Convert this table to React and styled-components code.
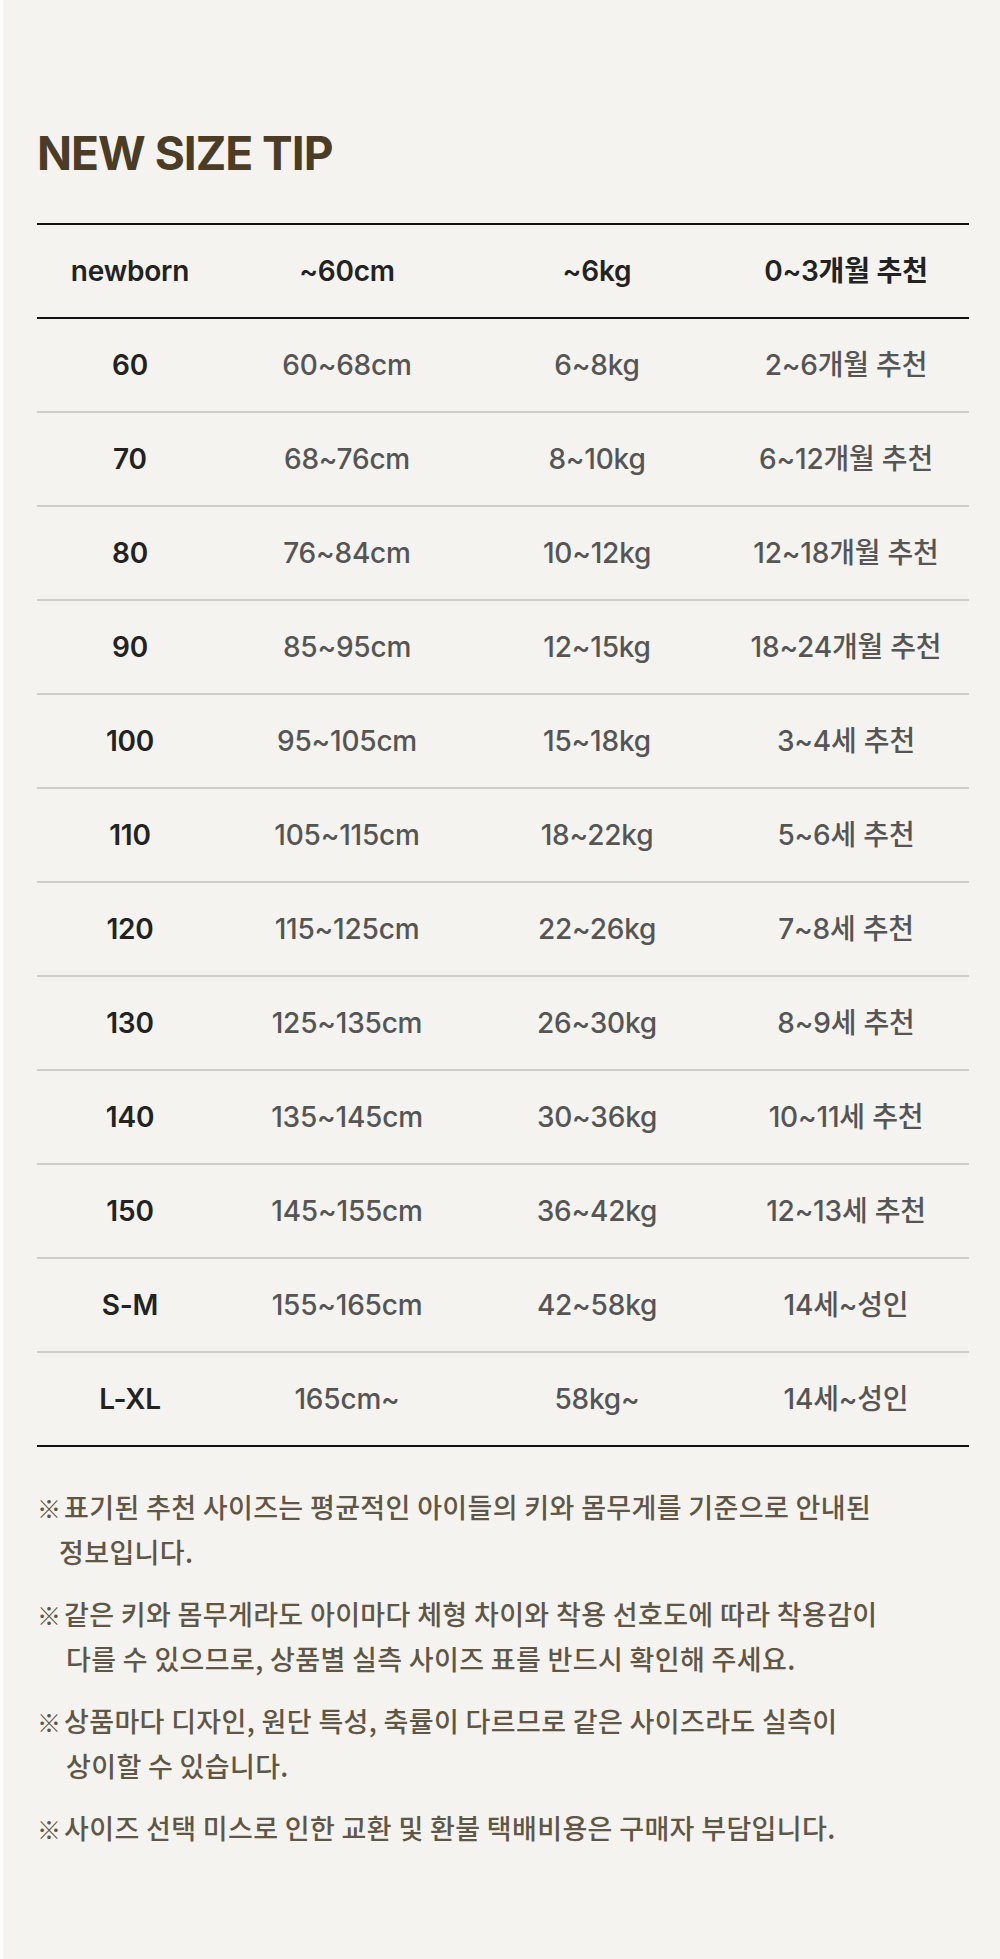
import React from "react";
import styled, { createGlobalStyle } from "styled-components";

const GlobalStyle = createGlobalStyle`
  html, body { margin: 0; padding: 0; background: #fbfbfa; }
  body { font-family: Inter, "Noto Sans CJK KR", sans-serif; }
  * { box-sizing: border-box; }
`;

const Page = styled.div`
  margin-left: 3px;
  min-height: 1959px;
  background: #f4f3ef;
  padding: 126px 31px 80px 34px;
`;

const Title = styled.h1`
  margin: 0 0 42px;
  font-family: Inter, "Noto Sans CJK KR", sans-serif;
  font-size: 46px;
  line-height: 55px;
  font-weight: 700;
  color: #4a3c25;
  letter-spacing: -1px;
`;

const Table = styled.div`
  width: 932px;
  border-top: 2px solid #111;
  border-bottom: 2px solid #111;
`;

const Row = styled.div`
  display: grid;
  grid-template-columns: 186px 248px 252px 1fr;
  align-items: center;
  height: 94px;
  border-bottom: 2px solid ${(p) => (p.$head ? "#111" : "#cfcdc9")};
  &:last-child { border-bottom: none; height: 92px; }
`;

const Cell = styled.div`
  text-align: center;
  font-family: Inter, "Noto Sans CJK KR", sans-serif;
  font-size: 28px;
  line-height: 34px;
  font-weight: ${(p) => (p.$strong ? 600 : 500)};
  color: ${(p) => (p.$strong ? "#222" : "#555")};
  letter-spacing: -0.2px;
`;

const Notes = styled.div`
  margin-top: 37px;
  display: flex;
  flex-direction: column;
  gap: 17px;
`;

const Note = styled.p`
  margin: 0;
  padding-left: ${(p) => p.$indent}px;
  text-indent: -${(p) => p.$indent}px;
  font-family: "Noto Sans CJK KR", sans-serif;
  font-size: 27px;
  line-height: 45px;
  font-weight: 500;
  color: #5f5646;
  letter-spacing: 0.35px;
`;

const Mark = styled.span`
  display: inline-block;
  text-indent: 0;
  width: 27px;
  font-size: 24px;
  line-height: 1;
  font-weight: 700;
  letter-spacing: 0;
`;

const header = ["newborn", "~60cm", "~6kg", "0~3개월 추천"];
const rows = [
  ["60", "60~68cm", "6~8kg", "2~6개월 추천"],
  ["70", "68~76cm", "8~10kg", "6~12개월 추천"],
  ["80", "76~84cm", "10~12kg", "12~18개월 추천"],
  ["90", "85~95cm", "12~15kg", "18~24개월 추천"],
  ["100", "95~105cm", "15~18kg", "3~4세 추천"],
  ["110", "105~115cm", "18~22kg", "5~6세 추천"],
  ["120", "115~125cm", "22~26kg", "7~8세 추천"],
  ["130", "125~135cm", "26~30kg", "8~9세 추천"],
  ["140", "135~145cm", "30~36kg", "10~11세 추천"],
  ["150", "145~155cm", "36~42kg", "12~13세 추천"],
  ["S-M", "155~165cm", "42~58kg", "14세~성인"],
  ["L-XL", "165cm~", "58kg~", "14세~성인"],
];

const notes = [
  { indent: 22, lines: ["표기된 추천 사이즈는 평균적인 아이들의 키와 몸무게를 기준으로 안내된", "정보입니다."] },
  { indent: 29, lines: ["같은 키와 몸무게라도 아이마다 체형 차이와 착용 선호도에 따라 착용감이", "다를 수 있으므로, 상품별 실측 사이즈 표를 반드시 확인해 주세요."] },
  { indent: 29, lines: ["상품마다 디자인, 원단 특성, 축률이 다르므로 같은 사이즈라도 실측이", "상이할 수 있습니다."] },
  { indent: 29, lines: ["사이즈 선택 미스로 인한 교환 및 환불 택배비용은 구매자 부담입니다."] },
];

export default function App() {
  return (
    <>
      <GlobalStyle />
      <Page>
        <Title>NEW SIZE TIP</Title>
        <Table>
          <Row $head>
            {header.map((h, i) => (
              <Cell key={i} $strong>{h}</Cell>
            ))}
          </Row>
          {rows.map((r, i) => (
            <Row key={i}>
              {r.map((c, j) => (
                <Cell key={j} $strong={j === 0}>{c}</Cell>
              ))}
            </Row>
          ))}
        </Table>
        <Notes>
          {notes.map((n, i) => (
            <Note key={i} $indent={n.indent}>
              <Mark>※</Mark>
              {n.lines.map((l, k) => (
                <React.Fragment key={k}>
                  {k > 0 && <br />}
                  {l}
                </React.Fragment>
              ))}
            </Note>
          ))}
        </Notes>
      </Page>
    </>
  );
}
